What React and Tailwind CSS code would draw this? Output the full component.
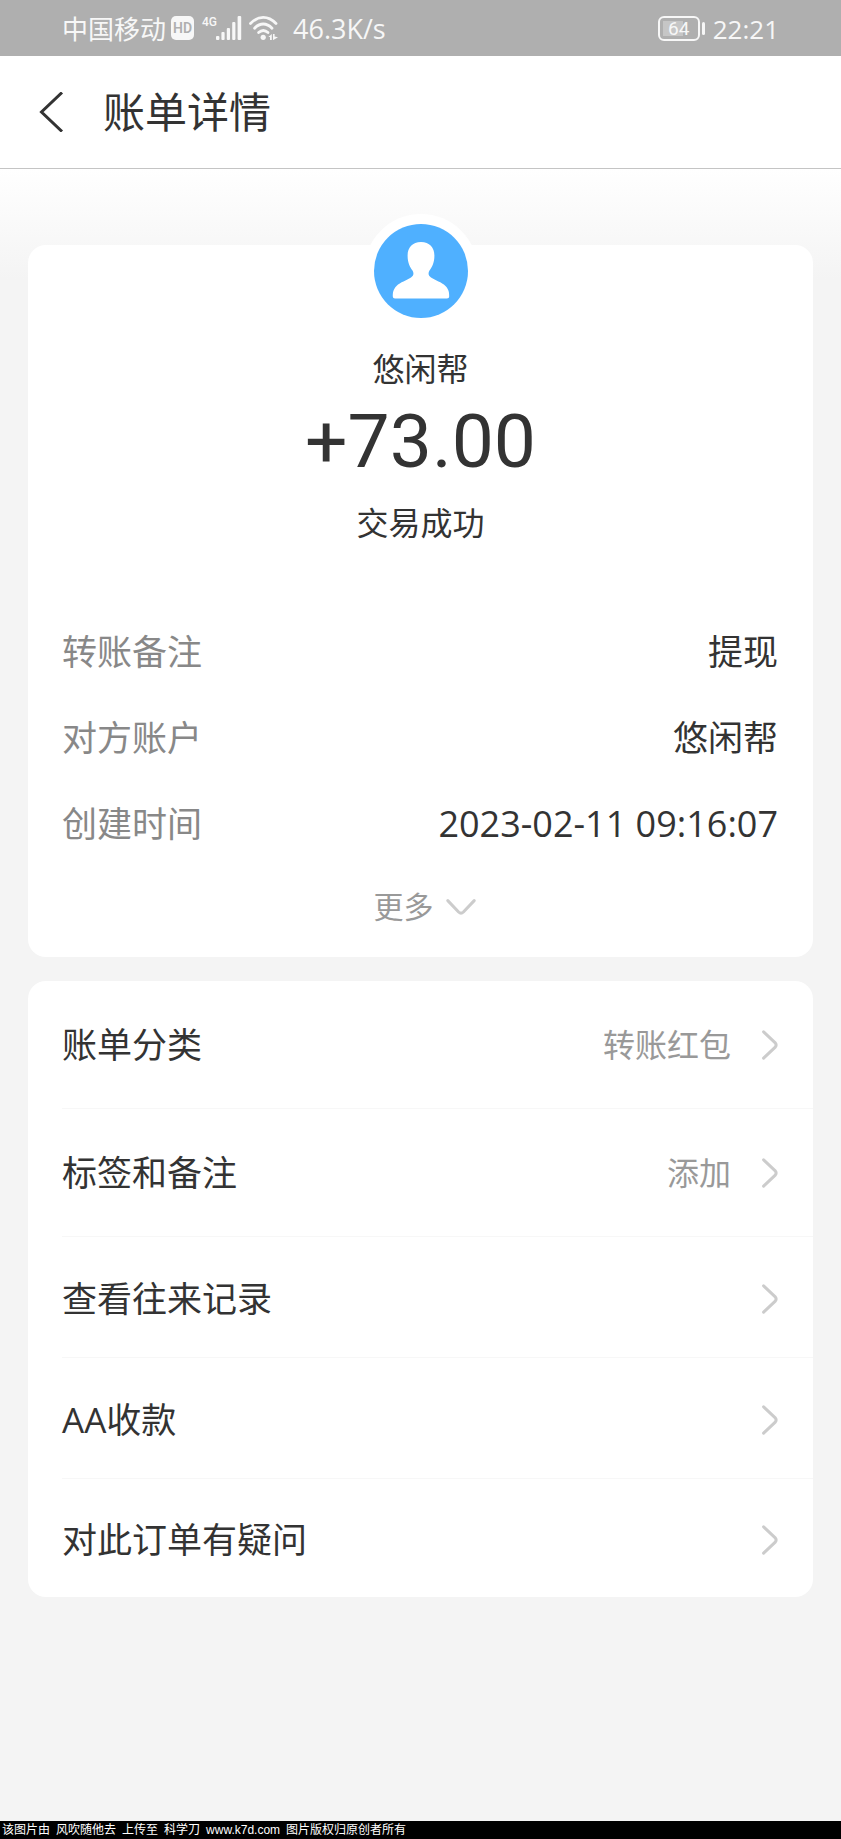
import React from 'react';

const DETAILS = [
  { label: '转账备注', value: '提现', size: 'text-[35px]' },
  { label: '对方账户', value: '悠闲帮', size: 'text-[35px]' },
  { label: '创建时间', value: '2023-02-11 09:16:07', size: 'text-[36px]' },
];

const ACTIONS = [
  { label: '账单分类', value: '转账红包', height: 'h-[128px]' },
  { label: '标签和备注', value: '添加', height: 'h-[128px]' },
  { label: '查看往来记录', height: 'h-[121px] pt-1' },
  { label: 'AA收款', height: 'h-[121px] pt-1' },
  { label: '对此订单有疑问', height: 'h-[118px] pt-1' },
];

const CREDIT = ['该图片由', '风吹随他去', '上传至', '科学刀', 'www.k7d.com', '图片版权归原创者所有'];

const SignalIcon = () => (
  <svg className="w-[26px] h-[24px]" viewBox="0 0 26 24" fill="currentColor" aria-hidden="true">
    <rect x="0" y="20" width="3.4" height="4" rx="1" />
    <rect x="5.4" y="16" width="3.2" height="8" rx="1" />
    <rect x="10.8" y="12" width="3.2" height="12" rx="1" />
    <rect x="16.2" y="6" width="3.2" height="18" rx="1" />
    <rect x="21.6" y="0" width="3.6" height="24" rx="1" />
  </svg>
);

const WifiIcon = () => (
  <svg className="w-[30px] h-[24px]" viewBox="0 0 30 24" fill="none" stroke="currentColor" aria-hidden="true">
    <path d="M1.5 7.4C9.5-.6 19-.6 27 7.4" strokeWidth="2.8" strokeLinecap="round" />
    <path d="M5.6 12.2C11 6.6 17.6 6.6 23 12.2" strokeWidth="2.8" strokeLinecap="round" />
    <path d="M9.6 16.6C12.6 13.8 16 13.8 19 16.6" strokeWidth="2.8" strokeLinecap="round" />
    <circle cx="14.2" cy="21.3" r="2.6" fill="currentColor" stroke="none" />
    <path d="M19.4 21L22.8 18V24H21V21ZM24 18H25.6V20.6L29 21.2L24 24.2Z" fill="currentColor" stroke="none" />
  </svg>
);

const Chevron = ({ className }) => (
  <svg
    className={className}
    viewBox="0 0 16 30"
    fill="none"
    stroke="#cccccc"
    strokeWidth="3"
    strokeLinecap="round"
    strokeLinejoin="round"
    aria-hidden="true"
  >
    <path d="M1.6 1.8L13 12.6Q15.2 15 13 17.4L1.6 28.2" />
  </svg>
);

const StatusBar = () => (
  <div className="h-14 px-[62px] flex items-center justify-between bg-[#afafaf] text-[#f7f7f7]">
    <div className="flex items-center">
      <span className="mt-0.5 text-[26px] leading-8">中国移动</span>
      <span className="ml-[5px] w-[23px] h-6 rounded-[5px] bg-[#f7f7f7] text-[#afafaf] font-[Roboto] font-semibold text-[14px] leading-6 flex justify-center">
        HD
      </span>
      <span className="ml-2 w-[14px] h-6 font-[Roboto] font-medium text-[12px] leading-3">4G</span>
      <SignalIcon />
      <span className="ml-[7px] flex">
        <WifiIcon />
      </span>
      <span className="mt-0.5 ml-[14px] text-[27px] leading-8">46.3K/s</span>
    </div>
    <div className="flex items-center">
      <span className="w-[42px] h-[25px] p-[3px] flex border-2 border-[#f7f7f7] rounded-[6px]">
        <span className="flex-1 bg-linear-to-r from-[#c6c6c6] from-64% to-[#afafaf] to-64% font-[Roboto] text-[19px] leading-[15px] text-center">
          64
        </span>
      </span>
      <span className="ml-0.5 w-[3px] h-[13px] rounded-full bg-[#f7f7f7]" />
      <span className="mt-0.5 ml-2 text-[26px] leading-8">22:21</span>
    </div>
  </div>
);

const Avatar = () => (
  <div className="-mt-[31px] mx-auto w-[114px] h-[114px] rounded-full bg-white p-[10px]">
    <svg className="w-full h-full" viewBox="0 0 94 94" aria-hidden="true">
      <circle cx="47" cy="47" r="47" fill="#4fb0ff" />
      <path
        fill="#ffffff"
        d="M47 18C55.500 18 60.400 23.500 60.400 31.500C60.400 39 58 43 55.500 46.500C53.800 49.500 54.500 51.800 57 53.500C61.500 56.500 67.500 58 71.500 62C75 65.500 75.200 69 75.200 72.500Q75.200 74.600 73 74.600H21Q18.800 74.600 18.800 72.500C18.800 69 19 65.500 22.500 62C26.500 58 32.500 56.500 37 53.500C39.500 51.800 40.200 49.500 38.500 46.500C36 43 33.600 39 33.600 31.500C33.600 23.500 38.500 18 47 18Z"
      />
    </svg>
  </div>
);

const ActionRow = ({ action }) => (
  <li className={`border-b border-[#f7f7f7] last:border-b-0 ${action.height}`}>
    <button type="button" className="w-full h-full pr-[35px] flex items-center text-left">
      <span className="flex-1 text-[35px] leading-[48px]">{action.label}</span>
      {action.value && <span className="text-[32px] leading-[48px] text-[#999999]">{action.value}</span>}
      <Chevron className="ml-[31px] w-4 h-[30px]" />
    </button>
  </li>
);

const App = () => {
  return (
    <div className="min-h-screen flex flex-col bg-[#f4f4f4] text-[#333333] font-['Open_Sans','Noto_Sans_CJK_SC',sans-serif]">
      <StatusBar />

      <header className="h-[113px] pl-[38px] flex items-center bg-white border-b border-[#c4c4c4]">
        <button type="button" aria-label="返回" className="mr-[39px]">
          <svg className="w-[26px] h-[40px]" viewBox="0 0 26 40" fill="none" stroke="#333333" strokeWidth="3" aria-hidden="true">
            <path d="M24 .5L3.500 20L24 39.500" />
          </svg>
        </button>
        <h1 className="text-[42px] leading-[56px]">账单详情</h1>
      </header>

      <main className="flex-1 px-7 pt-[76px] bg-[linear-gradient(#ffffff,#f4f4f4_110px)]">
        {/* Transaction summary */}
        <section className="flow-root rounded-[18px] bg-white">
          <Avatar />
          <p className="mt-[21px] text-[32px] leading-10 text-center">悠闲帮</p>
          <p className="mt-2 font-[Roboto,sans-serif] text-[75px] leading-[88px] text-center">+73.00</p>
          <p className="mt-[18px] text-[32px] leading-10 text-center">交易成功</p>

          <dl className="mt-[66px] pl-[34px] pr-[35px] leading-[48px]">
            {DETAILS.map((item) => (
              <div key={item.label} className="h-[86px] flex items-center justify-between">
                <dt className="text-[35px] text-[#888888]">{item.label}</dt>
                <dd className={item.size}>{item.value}</dd>
              </div>
            ))}
          </dl>

          <button type="button" className="w-full h-[90px] pl-2 pb-2.5 flex items-center justify-center text-[30px] leading-10 text-[#999999]">
            更多
            <svg className="ml-3 w-[30px] h-4" viewBox="0 0 30 16" fill="none" stroke="#cccccc" strokeWidth="3" strokeLinecap="round" strokeLinejoin="round" aria-hidden="true">
              <path d="M1.800 1.600L12.600 13Q15 15.200 17.400 13L28.200 1.600" />
            </svg>
          </button>
        </section>

        {/* Bill actions */}
        <ul className="mt-6 mb-6 pl-[34px] rounded-[18px] bg-white">
          {ACTIONS.map((action) => (
            <ActionRow key={action.label} action={action} />
          ))}
        </ul>
      </main>

      <footer className="h-[18px] px-0.5 flex gap-1.5 bg-black text-white text-[12px] leading-[18px] font-['Liberation_Sans','Noto_Sans_CJK_SC',sans-serif]">
        {CREDIT.map((part) => (
          <span key={part}>{part}</span>
        ))}
      </footer>
    </div>
  );
};

export default App;
